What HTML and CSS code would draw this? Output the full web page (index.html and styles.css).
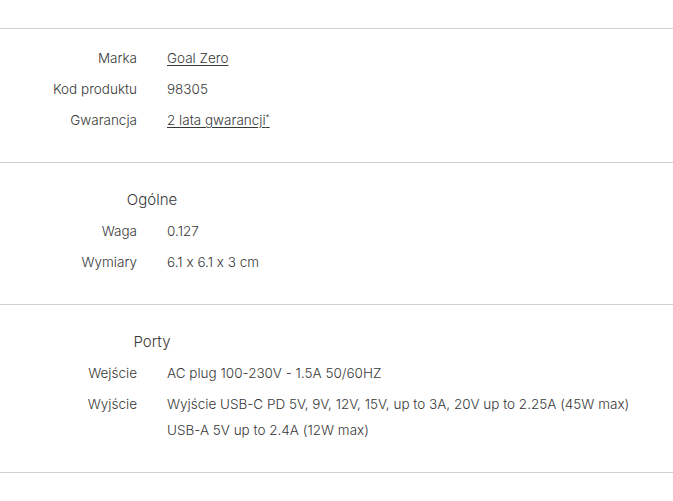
FILE: index.html
```html
<!DOCTYPE html>
<html lang="pl">
<head>
<meta charset="utf-8">
<link rel="stylesheet" href="styles.css">
</head>
<body>
<div class="top"></div>
<section class="group first">
  <div class="row"><div class="label">Marka</div><div class="value"><a href="#">Goal Zero</a></div></div>
  <div class="row"><div class="label">Kod produktu</div><div class="value">98305</div></div>
  <div class="row"><div class="label">Gwarancja</div><div class="value"><a href="#">2 lata gwarancji<sup>*</sup></a></div></div>
</section>
<section class="group">
  <h3 class="heading">Ogólne</h3>
  <div class="row"><div class="label">Waga</div><div class="value">0.127</div></div>
  <div class="row"><div class="label">Wymiary</div><div class="value">6.1 x 6.1 x 3 cm</div></div>
</section>
<section class="group">
  <h3 class="heading">Porty</h3>
  <div class="row"><div class="label">Wejście</div><div class="value">AC plug 100-230V - 1.5A 50/60HZ</div></div>
  <div class="row"><div class="label">Wyjście</div><div class="value">Wyjście USB-C PD 5V, 9V, 12V, 15V, up to 3A, 20V up to 2.25A (45W max)<br>USB-A 5V up to 2.4A (12W max)</div></div>
</section>
</body>
</html>
```
FILE: styles.css
```css
html, body {
  margin: 0;
  padding: 0;
  background: #fff;
}
body {
  font-family: Inter, "Liberation Sans", sans-serif;
  font-size: 13.5px;
  font-weight: 300;
  color: #383838;
  letter-spacing: 0;
  font-feature-settings: "calt" 0;
}
.top {
  height: 28px;
}
.group {
  border-top: 1px solid #d0d0d0;
  padding: 24px 0 29px;
  display: flex;
  flex-direction: column;
  gap: 5px;
}
.group:last-child {
  border-bottom: 1px solid #d0d0d0;
}
.group.first {
  padding: 16px 0 29px;
}
.heading {
  margin: 0;
  width: 304px;
  text-align: center;
  font-size: 15px;
  font-weight: 300;
  line-height: 26px;
}
.row {
  display: flex;
  gap: 30px;
  line-height: 26px;
}
.label {
  width: 137px;
  flex: none;
  text-align: right;
}
.value a {
  color: inherit;
  text-decoration: underline;
  text-underline-offset: 2px;
}
.value sup {
  font-size: 8px;
  line-height: 0;
}
```
